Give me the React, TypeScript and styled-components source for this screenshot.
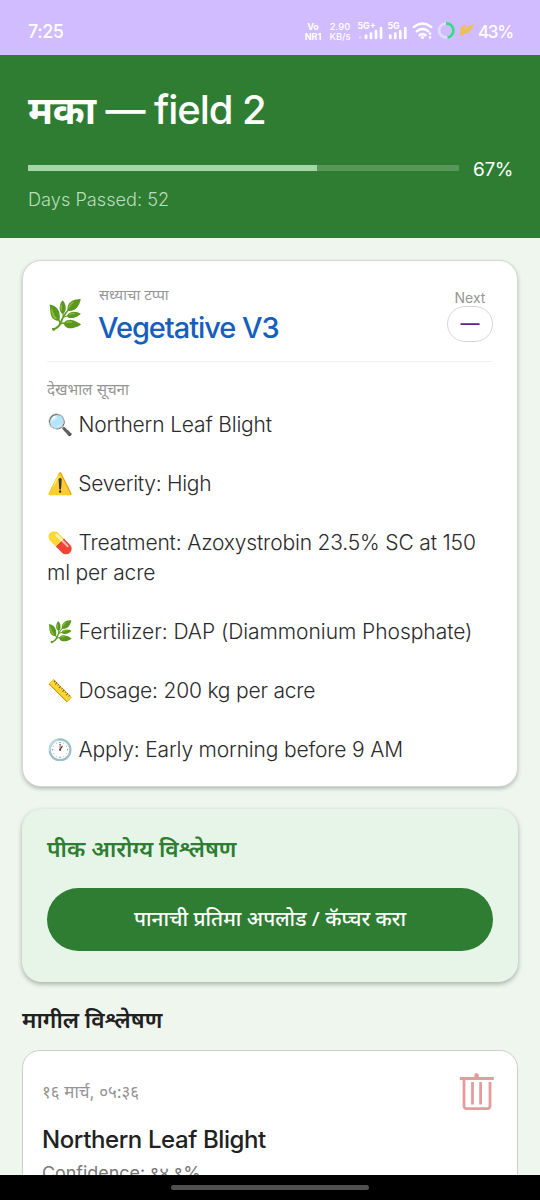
import React from "react";
import styled, { createGlobalStyle } from "styled-components";

const Global = createGlobalStyle`
  * { box-sizing: border-box; }
  body { margin: 0; background: #eef6ee; font-family: Inter, "Noto Sans", "Noto Sans Devanagari", sans-serif; }
`;

const Screen = styled.div`
  height: 1200px;
  display: flex;
  flex-direction: column;
  overflow: hidden;
  background: #eef6ee;
`;

const StatusBar = styled.div`
  height: 55px;
  flex: none;
  background: #d0bcff;
  color: #fff;
  display: flex;
  align-items: center;
  padding: 8px 28px 0 28px;
`;

const Clock = styled.div`
  font-size: 18px;
  font-weight: 500;
  flex: 1;
  letter-spacing: -0.5px;
`;

const Tiny = styled.div<{ $w: number; $weight: number; $size: number }>`
  width: ${(p) => p.$w}px;
  font-size: ${(p) => p.$size}px;
  line-height: 10px;
  font-weight: ${(p) => p.$weight};
  text-align: center;
  white-space: nowrap;
`;

const StatusIcons = styled.svg`
  display: block;
  flex: none;
  font-family: Inter, sans-serif;
`;

const Battery = styled.div`
  width: 34px;
  font-size: 17px;
  font-weight: 500;
  letter-spacing: -1.3px;
  margin-left: 3px;
`;

const Header = styled.header`
  height: 183px;
  flex: none;
  background: #2e7d32;
  color: #fff;
  padding: 30px 28px 0;
`;

const Title = styled.h1`
  margin: 0;
  font-size: 40px;
  line-height: 50px;
  font-weight: 480;
  letter-spacing: -1.05px;
  white-space: nowrap;
`;

const CropName = styled.span`
  font-weight: 700;
  font-size: 38.5px;
  letter-spacing: -0.3px;
`;

const Progress = styled.div`
  display: flex;
  align-items: center;
  gap: 14px;
  margin-top: 22px;
  height: 24px;
`;

const Track = styled.div`
  flex: 1;
  height: 6px;
  background: #589759;
  margin-top: -3px;
`;

const Fill = styled.div`
  height: 6px;
  background: #a5d6a7;
`;

const Percent = styled.div`
  font-size: 19px;
  width: 39px;
  letter-spacing: -0.4px;
`;

const Days = styled.div`
  margin-top: 6px;
  font-size: 18.2px;
  line-height: 24px;
  color: #b9dfba;
  font-weight: 350;
`;

const Content = styled.main`
  flex: 1;
  min-height: 0;
  overflow: hidden;
  padding: 23px 22px 0;
`;

const StageCard = styled.section`
  height: 525px;
  margin: 0 1px;
  border-radius: 18px;
  background: #fff;
  box-shadow: 0 0 0 1px #d3d8d3, 0 2px 5px rgba(0, 0, 0, 0.32);
  padding: 24px 24px 0;
`;

const StageRow = styled.div`
  height: 77px;
  display: flex;
  border-bottom: 1.5px solid #f0f0f0;
`;

const StageIcon = styled.div`
  width: 52px;
  padding-top: 10px;
  font-size: 29px;
  line-height: 40px;
`;

const StageText = styled.div`
  flex: 1;
`;

const Caption = styled.div<{ $size: number }>`
  font-size: ${(p) => p.$size}px;
  line-height: 21px;
  color: #969696;
  font-weight: 370;
  white-space: nowrap;
`;

const StageName = styled.div`
  font-size: 29px;
  line-height: 36px;
  margin-top: 4px;
  margin-left: -1px;
  font-weight: 450;
  letter-spacing: -1.05px;
  color: #1560bd;
`;

const NextBox = styled.div`
  width: 46px;
  text-align: center;
  padding-top: 2px;
`;

const NextPill = styled.div`
  height: 36px;
  margin-top: -2px;
  border: 1.5px solid #d6d6d6;
  border-radius: 18px;
  display: flex;
  align-items: center;
  justify-content: center;
  color: #6a1b9a;
  font-size: 19px;
  line-height: 20px;
  font-weight: 500;
`;

const CareCaption = styled(Caption)`
  margin-top: 17px;
`;

const Advice = styled.div`
  margin-top: 10px;
  font-size: 21px;
  line-height: 29.5px;
  color: #2b2b2b;
  font-weight: 350;
`;

const AdviceLine = styled.div<{ $spacing: number }>`
  margin-bottom: 29.5px;
  letter-spacing: ${(p) => p.$spacing}px;
`;

const HealthCard = styled.section`
  height: 173px;
  margin-top: 23px;
  border-radius: 20px;
  background: #e7f5e9;
  box-shadow: 0 2px 5px rgba(0, 0, 0, 0.3);
  padding: 24px 25px 0;
`;

const HealthTitle = styled.h2`
  margin: 0;
  font-size: 22.8px;
  line-height: 32px;
  font-weight: 600;
  color: #2e7d32;
`;

const UploadButton = styled.button`
  display: block;
  width: 100%;
  height: 63px;
  margin-top: 23px;
  padding: 0 0 3px;
  border: 0;
  border-radius: 32px;
  background: #2e7d32;
  color: #fff;
  font: 500 20.7px "Noto Sans", "Noto Sans Devanagari", sans-serif;
`;

const HistoryTitle = styled.h2`
  margin: 22px 0 0;
  font-size: 22.8px;
  line-height: 32px;
  font-weight: 600;
  color: #212121;
`;

const HistoryCard = styled.section`
  height: 220px;
  margin-top: 14px;
  border: 1.5px solid #cbd0cb;
  border-radius: 18px;
  background: #fff;
  padding: 21px 22px 0 19px;
`;

const HistoryTop = styled.div`
  display: flex;
  justify-content: space-between;
  height: 50px;
`;

const DateText = styled.div`
  font-size: 16.9px;
  line-height: 40px;
  color: #949494;
`;

const Disease = styled.div`
  font-size: 24px;
  line-height: 34px;
  margin-top: 1px;
  font-weight: 450;
  color: #212121;
  letter-spacing: -0.4px;
`;

const Confidence = styled.div`
  font-size: 17.9px;
  line-height: 24px;
  margin-top: 4px;
  color: #777;
  font-weight: 370;
`;

const NavBar = styled.nav`
  height: 25px;
  flex: none;
  background: #000;
  display: flex;
  justify-content: center;
  padding-top: 10px;
`;

const Handle = styled.div`
  width: 198px;
  height: 5px;
  border-radius: 3px;
  background: #505050;
`;

const advice = [
  { text: "🔍 Northern Leaf Blight", spacing: -0.17 },
  { text: "⚠️ Severity: High", spacing: -0.28 },
  { text: "💊 Treatment: Azoxystrobin 23.5% SC at 150 ml per acre", spacing: -0.17 },
  { text: "🌿 Fertilizer: DAP (Diammonium Phosphate)", spacing: -0.05 },
  { text: "📏 Dosage: 200 kg per acre", spacing: -0.2 },
  { text: "🕐 Apply: Early morning before 9 AM", spacing: -0.17 },
];

function Signal({ x }: { x: number }) {
  return (
    <path
      d={`M${x} 38V35.5M${x + 5} 38V33.5M${x + 10} 38V31M${x + 15} 38V28`}
      stroke="#fff"
      strokeWidth="2.7"
      strokeLinecap="round"
    />
  );
}

export default function App() {
  return (
    <Screen>
      <Global />
      <StatusBar>
        <Clock>7:25</Clock>
        <Tiny $w={20} $weight={700} $size={9}>Vo<br />NR1</Tiny>
        <Tiny $w={34} $weight={450} $size={9.3}>2.90<br />KB/s</Tiny>
        <StatusIcons width="118" height="25" viewBox="357 19 118 25" fill="none">
          <text x="357.5" y="29" fontSize="8.8" fontWeight="700" fill="#fff">5G+</text>
          <text x="387.5" y="29" fontSize="8.8" fontWeight="700" fill="#fff">5G</text>
          <circle cx="360" cy="37.5" r="1.3" fill="#e4d8ff" />
          <Signal x={366} />
          <Signal x={390.3} />
          <path d="M413.8 26.9Q422.5 20.2 431.2 26.9M416.8 31.2Q422.5 26.8 428.2 31.2M419.6 35.2Q422.5 33 425.4 35.2" stroke="#fff" strokeWidth="2.5" strokeLinecap="round" />
          <circle cx="422.5" cy="37.5" r="1.6" fill="#fff" />
          <path d="M430 32.5V34.8M430 36.3V38.6" stroke="#fff" strokeWidth="2.4" />
          <circle cx="446" cy="30.5" r="7" stroke="#e6dcff" strokeWidth="2.6" />
          <path d="M446 23.5A7 7 0 0 1 447.5 37.4" stroke="#39d98a" strokeWidth="2.8" />
          <path d="M460 35.8L460.8 27.5L465.2 24.8L466 25.5L464.5 30.5Q467.5 25.5 473.5 24Q472.8 29 469 31.2L469.8 31.6Q466.5 33.8 464.5 33.5Q463 35.8 460 35.8Z" fill="#efbf4f" />
        </StatusIcons>
        <Battery>43%</Battery>
      </StatusBar>
      <Header>
        <Title><CropName>मका</CropName> — field 2</Title>
        <Progress>
          <Track><Fill style={{ width: "67%" }} /></Track>
          <Percent>67%</Percent>
        </Progress>
        <Days>Days Passed: 52</Days>
      </Header>
      <Content>
        <StageCard>
          <StageRow>
            <StageIcon>🌿</StageIcon>
            <StageText>
              <Caption $size={14.8}>सध्याचा टप्पा</Caption>
              <StageName>Vegetative V3</StageName>
            </StageText>
            <NextBox>
              <Caption $size={14}>Next</Caption>
              <NextPill>—</NextPill>
            </NextBox>
          </StageRow>
          <CareCaption $size={15.2}>देखभाल सूचना</CareCaption>
          <Advice>
            {advice.map((line) => (
              <AdviceLine key={line.text} $spacing={line.spacing}>{line.text}</AdviceLine>
            ))}
          </Advice>
        </StageCard>
        <HealthCard>
          <HealthTitle>पीक आरोग्य विश्लेषण</HealthTitle>
          <UploadButton>पानाची प्रतिमा अपलोड / कॅप्चर करा</UploadButton>
        </HealthCard>
        <HistoryTitle>मागील विश्लेषण</HistoryTitle>
        <HistoryCard>
          <HistoryTop>
            <DateText>१६ मार्च, ०५:३६</DateText>
            <svg width="36" height="40" viewBox="459 1072 36 40" fill="none" stroke="#e99a9c" strokeWidth="2.8">
              <path d="M459.8 1078.5H493.8M464 1079V1106Q464 1108.7 467 1108.7H487Q490 1108.7 490 1106V1082M472.5 1082V1104.5M480.6 1082V1104.5" />
              <path d="M474.3 1078V1075.5Q474.3 1073 476.5 1073Q478.8 1073 478.8 1075.5V1078Z" fill="#e99a9c" stroke="none" />
            </svg>
          </HistoryTop>
          <Disease>Northern Leaf Blight</Disease>
          <Confidence>Confidence: ९४.९%</Confidence>
        </HistoryCard>
      </Content>
      <NavBar><Handle /></NavBar>
    </Screen>
  );
}
